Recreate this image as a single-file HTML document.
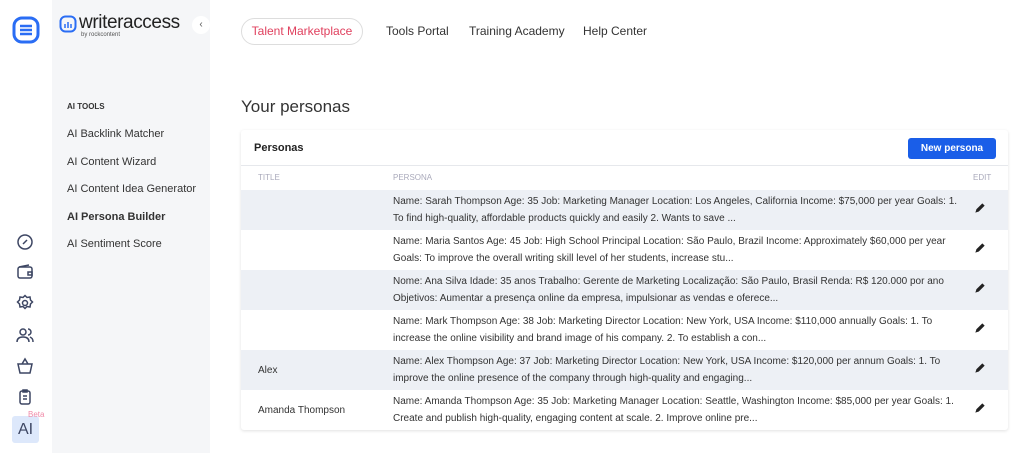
<!DOCTYPE html>
<html><head><meta charset="utf-8"><style>
*{box-sizing:border-box;margin:0;padding:0}
body{width:1024px;height:453px;overflow:hidden;background:#fff;font-family:"Liberation Sans",sans-serif;color:#333;position:relative}
.rail{position:absolute;left:0;top:0;width:52px;height:453px;background:#fff}
.side{position:absolute;left:52px;top:0;width:158px;height:453px;background:#f5f6f8}
.ic{position:absolute;left:16px}
.nav a{position:absolute;left:67px;font-size:11px;color:#333}
.top{position:absolute;top:24px;font-size:12px;color:#333}
.card{position:absolute;left:241px;top:130px;width:767px;height:300px;background:#fff;box-shadow:0 1px 3px rgba(0,0,0,.12);border-radius:3px}
.row{position:absolute;left:0;width:767px;height:40px;font-size:10px;color:#333;line-height:17px}
.row .t{position:absolute;left:17px;top:12px}
.row .p{position:absolute;left:152px;top:3px;width:570px}
.row svg{position:absolute;left:732px;top:11px}
.g{background:#edf0f5}
</style></head><body>
<div class="rail">
<svg class="ic" style="left:12px;top:16px" width="28" height="28" viewBox="0 0 28 28"><rect x="2" y="2" width="24" height="24" rx="8" fill="none" stroke="#2a6df4" stroke-width="3"/><path d="M8 10h12M8 14h12M8 18h12" stroke="#2a6df4" stroke-width="2.5"/></svg>
<svg class="ic" style="top:233px" width="18" height="18" viewBox="0 0 18 18" fill="none" stroke="#3d4663" stroke-width="1.5"><circle cx="9" cy="9" r="7"/><path d="M7 11l4-4"/></svg>
<svg class="ic" style="top:263px" width="18" height="18" viewBox="0 0 18 18" fill="none" stroke="#3d4663" stroke-width="1.5"><rect x="2" y="4" width="14" height="11" rx="2"/><path d="M3 4l10-2M12 9h4v3h-4z"/></svg>
<svg class="ic" style="top:294px" width="18" height="18" viewBox="0 0 18 18" fill="none" stroke="#3d4663" stroke-width="1.5"><circle cx="9" cy="9" r="2.5"/><path d="M9 1.5l2 2 3-.5.5 3 2 2-2 2-.5 3-3-.5-2 2-2-2-3 .5-.5-3-2-2 2-2 .5-3 3 .5z"/></svg>
<svg class="ic" style="top:326px" width="18" height="18" viewBox="0 0 18 18" fill="none" stroke="#3d4663" stroke-width="1.5"><circle cx="7" cy="6" r="3"/><path d="M1 16c0-4 3-5 6-5s6 1 6 5M12 3a3 3 0 010 6M14 11c2 1 3 2 3 5"/></svg>
<svg class="ic" style="top:357px" width="18" height="18" viewBox="0 0 18 18" fill="none" stroke="#3d4663" stroke-width="1.5"><path d="M2 7h14l-2 9H4z M6 7l3-5 3 5"/></svg>
<svg class="ic" style="top:388px" width="18" height="18" viewBox="0 0 18 18" fill="none" stroke="#3d4663" stroke-width="1.5"><rect x="4" y="3" width="10" height="13" rx="2"/><path d="M7 2h4v2H7zM7 8h4M7 11h4"/></svg>
<div style="position:absolute;left:12px;top:416px;width:27px;height:27px;background:#dde8fb;border-radius:3px;font-size:16px;color:#3d4663;text-align:center;line-height:27px">AI</div>
<div style="position:absolute;left:28px;top:410px;font-size:8px;color:#f08aa8">Beta</div>
</div>
<div class="side">
<svg style="position:absolute;left:7px;top:15px" width="18" height="18" viewBox="0 0 18 18" fill="none" stroke="#2a6df4" stroke-width="2"><rect x="1.5" y="1.5" width="15" height="15" rx="5"/><path d="M6 9v4M9 7v6M12 9v4" stroke-width="1.5"/></svg>
<div style="position:absolute;left:27px;top:12px;font-size:19px;color:#222;letter-spacing:-.4px">writeraccess</div>
<div style="position:absolute;left:29px;top:32px;font-size:6px;color:#555">by rockcontent</div>
<div style="position:absolute;left:140px;top:16px;width:18px;height:18px;border-radius:50%;background:#fff;font-size:10px;color:#555;text-align:center;line-height:18px">‹</div>
</div>
<div class="nav">
<div style="position:absolute;left:67px;top:102px;font-size:8px;font-weight:bold;color:#333">AI TOOLS</div>
<a style="top:128px">AI Backlink Matcher</a>
<a style="top:156px">AI Content Wizard</a>
<a style="top:183px">AI Content Idea Generator</a>
<a style="top:211px;font-weight:bold">AI Persona Builder</a>
<a style="top:238px">AI Sentiment Score</a>
</div>
<div style="position:absolute;left:241px;top:18px;width:122px;height:27px;border:1px solid #ddd;border-radius:14px;color:#e0405e;font-size:12px;text-align:center;line-height:25px">Talent Marketplace</div>
<div class="top" style="left:386px">Tools Portal</div>
<div class="top" style="left:469px">Training Academy</div>
<div class="top" style="left:583px">Help Center</div>
<div style="position:absolute;left:241px;top:97px;font-size:17px;color:#333">Your personas</div>
<div class="card">
<div style="position:absolute;left:13px;top:12px;font-size:11px;font-weight:bold;color:#222">Personas</div>
<div style="position:absolute;left:667px;top:8px;width:88px;height:21px;background:#1a5ee8;border-radius:3px;color:#fff;font-size:10px;font-weight:bold;text-align:center;line-height:21px">New persona</div>
<div style="position:absolute;left:0;top:35px;width:767px;border-top:1px solid #e6e8ec"></div>
<div style="position:absolute;left:17px;top:43px;font-size:8px;color:#aab">TITLE</div>
<div style="position:absolute;left:152px;top:43px;font-size:8px;color:#aab">PERSONA</div>
<div style="position:absolute;left:732px;top:43px;font-size:8px;color:#aab">EDIT</div>
<div class="row g" style="top:60px"><div class="p">Name: Sarah Thompson Age: 35 Job: Marketing Manager Location: Los Angeles, California Income: $75,000 per year Goals: 1. To find high-quality, affordable products quickly and easily 2. Wants to save ...</div><svg width="14" height="14" viewBox="0 0 12 12"><path d="M2 10l1-3 5-5 2 2-5 5z" fill="#222"/></svg></div>
<div class="row" style="top:100px"><div class="p">Name: Maria Santos Age: 45 Job: High School Principal Location: São Paulo, Brazil Income: Approximately $60,000 per year Goals: To improve the overall writing skill level of her students, increase stu...</div><svg width="14" height="14" viewBox="0 0 12 12"><path d="M2 10l1-3 5-5 2 2-5 5z" fill="#222"/></svg></div>
<div class="row g" style="top:140px"><div class="p">Nome: Ana Silva Idade: 35 anos Trabalho: Gerente de Marketing Localização: São Paulo, Brasil Renda: R$ 120.000 por ano Objetivos: Aumentar a presença online da empresa, impulsionar as vendas e oferece...</div><svg width="14" height="14" viewBox="0 0 12 12"><path d="M2 10l1-3 5-5 2 2-5 5z" fill="#222"/></svg></div>
<div class="row" style="top:180px"><div class="p">Name: Mark Thompson Age: 38 Job: Marketing Director Location: New York, USA Income: $110,000 annually Goals: 1. To increase the online visibility and brand image of his company. 2. To establish a con...</div><svg width="14" height="14" viewBox="0 0 12 12"><path d="M2 10l1-3 5-5 2 2-5 5z" fill="#222"/></svg></div>
<div class="row g" style="top:220px"><div class="t">Alex</div><div class="p">Name: Alex Thompson Age: 37 Job: Marketing Director Location: New York, USA Income: $120,000 per annum Goals: 1. To improve the online presence of the company through high-quality and engaging...</div><svg width="14" height="14" viewBox="0 0 12 12"><path d="M2 10l1-3 5-5 2 2-5 5z" fill="#222"/></svg></div>
<div class="row" style="top:260px"><div class="t">Amanda Thompson</div><div class="p">Name: Amanda Thompson Age: 35 Job: Marketing Manager Location: Seattle, Washington Income: $85,000 per year Goals: 1. Create and publish high-quality, engaging content at scale. 2. Improve online pre...</div><svg width="14" height="14" viewBox="0 0 12 12"><path d="M2 10l1-3 5-5 2 2-5 5z" fill="#222"/></svg></div>
</div>
</body></html>
